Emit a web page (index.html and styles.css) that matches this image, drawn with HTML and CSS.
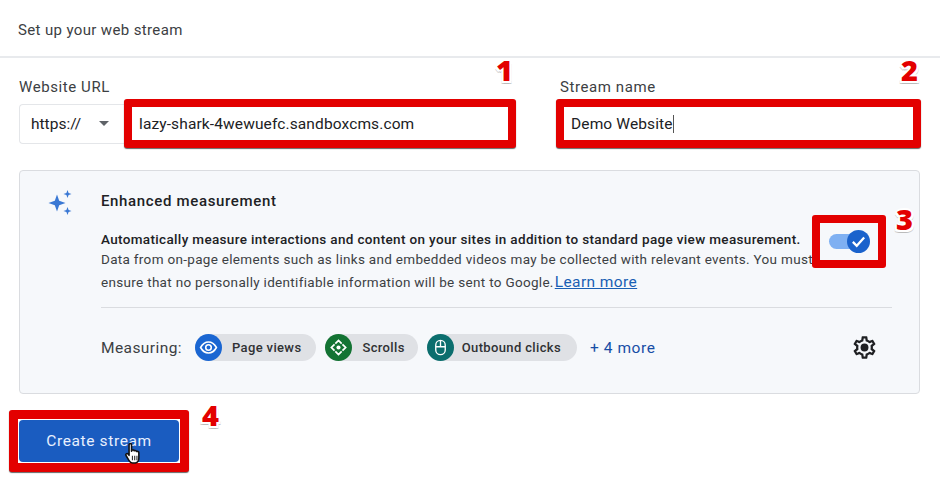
FILE: index.html
```html
<!DOCTYPE html>
<html lang="en">
<head>
<meta charset="utf-8">
<title>Set up your web stream</title>
<link rel="stylesheet" href="styles.css">
</head>
<body>
<div class="page">
  <header class="head">Set up your web stream</header>
  <section class="fields">
    <div class="url-field">
      <div class="label">Website URL</div>
      <div class="url-row">
        <div class="select">https://<span class="caret"></span></div>
        <div class="red-input">lazy-shark-4wewuefc.sandboxcms.com</div>
      </div>
    </div>
    <div class="name-field">
      <div class="label">Stream name</div>
      <div class="red-input name-input"><span class="typed">Demo Website</span></div>
    </div>
  </section>
  <section class="card">
    <div class="card-top">
      <svg class="sparkle" viewBox="0 0 26 26"><path fill="#3a78d4" d="M10 4.500l2.200 6.300 6.300 2.200-6.300 2.200L10 21.500l-2.200-6.300L1.500 13l6.300-2.200zM20.500 0l1.100 2.900 2.900 1.100-2.900 1.100-1.100 2.900-1.100-2.900-2.900-1.100 2.900-1.100zM20.500 17l1.100 2.900 2.900 1.100-2.900 1.100-1.100 2.900-1.100-2.900-2.900-1.100 2.900-1.100z"/></svg>
      <div class="card-title">Enhanced measurement</div>
    </div>
    <div class="desc-row">
      <div class="desc">
        <div class="desc-bold">Automatically measure interactions and content on your sites in addition to standard page view measurement.</div>
        <div class="desc-line">Data from on-page elements such as links and embedded videos may be collected with relevant events. You must</div>
        <div class="desc-line last">ensure that no personally identifiable information will be sent to Google.<a class="learn">Learn more</a></div>
      </div>
    </div>
    <div class="measuring">
      <span class="m-label">Measuring:</span>
      <span class="chip"><span class="chip-icon blue"><svg viewBox="0 0 24 24"><path fill="none" stroke="#fff" stroke-width="2" d="M2 12c2.500-4.500 6-7 10-7s7.500 2.500 10 7c-2.500 4.500-6 7-10 7s-7.500-2.500-10-7z"/><circle cx="12" cy="12" r="3.500" fill="none" stroke="#fff" stroke-width="2"/></svg></span>Page views</span>
      <span class="chip chip-short"><span class="chip-icon green"><svg viewBox="0 0 24 24"><path fill="none" stroke="#fff" stroke-width="2.200" d="M8 7l4-4 4 4M17 8l4 4-4 4M16 17l-4 4-4-4M7 16l-4-4 4-4"/><circle cx="12" cy="12" r="2.600" fill="#fff"/></svg></span>Scrolls</span>
      <span class="chip chip-wide"><span class="chip-icon teal"><svg viewBox="0 0 24 24"><rect x="6" y="3" width="12" height="18" rx="6" fill="none" stroke="#fff" stroke-width="1.700"/><path stroke="#fff" stroke-width="1.700" d="M6 11h12M12 3v8"/></svg></span>Outbound clicks</span>
      <span class="more">+ 4 more</span>
      <svg class="gear" viewBox="0 0 24 24"><path fill="#1f2023" fill-rule="evenodd" d="M19.430 12.980c.040-.320.070-.640.070-.980s-.030-.660-.070-.980l2.110-1.650c.190-.150.240-.420.120-.640l-2-3.460c-.120-.220-.390-.300-.610-.220l-2.490 1c-.520-.400-1.080-.730-1.690-.980l-.380-2.650C14.460 2.180 14.250 2 14 2h-4c-.250 0-.460.180-.490.420l-.380 2.650c-.610.250-1.170.590-1.690.980l-2.490-1c-.230-.090-.490 0-.610.220l-2 3.460c-.130.220-.070.490.120.640l2.110 1.650c-.040.320-.070.650-.070.980s.030.660.070.980l-2.110 1.650c-.190.150-.240.420-.120.640l2 3.460c.120.220.390.300.610.220l2.490-1c.520.400 1.080.730 1.690.980l.380 2.650c.030.240.240.420.490.420h4c.250 0 .460-.180.490-.420l.380-2.650c.610-.250 1.170-.590 1.690-.980l2.490 1c.230.090.490 0 .610-.220l2-3.460c.120-.220.070-.490-.120-.640l-2.110-1.650zM17.450 11.270c.040.310.050.520.050.730s-.020.430-.050.730l-.140 1.130.890.700 1.080.840-.700 1.210-1.270-.510-1.040-.420-.900.680c-.430.320-.840.560-1.250.730l-1.060.430-.160 1.130-.200 1.350h-1.400l-.190-1.350-.160-1.130-1.060-.430c-.430-.180-.830-.410-1.230-.710l-.910-.700-1.060.430-1.270.510-.700-1.210 1.080-.840.890-.700-.140-1.130c-.030-.310-.050-.540-.050-.740s.020-.430.050-.730l.140-1.130-.890-.700-1.080-.840.700-1.210 1.270.510 1.040.420.900-.680c.430-.320.840-.560 1.250-.730l1.060-.430.160-1.130.200-1.350h1.390l.190 1.350.160 1.130 1.060.430c.430.180.830.410 1.230.710l.910.700 1.060-.430 1.270-.510.700 1.210-1.070.85-.890.700.140 1.130z"/><circle cx="12" cy="12" r="3.500" fill="#1f2023"/></svg>
    </div>
    <div class="toggle-box"><span class="track"></span><span class="thumb"><svg viewBox="0 0 24 24"><path fill="none" stroke="#fff" stroke-width="3.200" d="M4 12.500l5.500 5.500L20 6.500"/></svg></span></div>
  </section>
  <div class="btn-box"><button class="create" type="button">Create stream</button></div>
  <svg class="hand" viewBox="0 0 16 20"><path fill="#fff" stroke="#111" stroke-width="1.400" stroke-linejoin="round" d="M4.500 2.200c0-1.500 2.200-1.500 2.200 0V8l.3-1c1.300-.4 2 0 2.100.6 1-.5 1.900-.1 2 .6 1-.3 2.100.1 2.100 1.100V14c0 2-1 4-3 4.500H7.500c-1.500 0-2.300-1-3-2.200L1.800 11.800c-.8-1.300.8-2.400 1.800-1.300l.9 1.100z"/><path stroke="#333" d="M7.500 12v4M9.500 12v4M11.500 12v4"/></svg>
  <span class="num n1">1</span>
  <span class="num n2">2</span>
  <span class="num n3">3</span>
  <span class="num n4">4</span>
</div>
</body>
</html>
```

FILE: styles.css
```css
* { box-sizing: border-box; }
html, body { margin: 0; padding: 0; background: #fff; }
body { font-family: Roboto, "Liberation Sans", sans-serif; color: #3c4043; overflow: hidden; }
.page { position: relative; width: 940px; height: 480px; overflow: hidden; }

.head { height: 58px; padding: 21px 18px 0; border-bottom: 2px solid #e8eaed; font-size: 15px; line-height: 18px; letter-spacing: .36px; }

.fields { display: flex; height: 112px; padding: 20px 19px 0 0; }
.label { font-size: 15px; line-height: 18px; letter-spacing: .58px; height: 21px; }
.url-field { margin-left: 19px; width: 497px; }
.url-row { display: flex; align-items: center; }
.select { display: flex; align-items: center; width: 105px; height: 40px; padding-left: 11px; border: 1px solid #e4e6e9; border-right: 0; border-radius: 4px 0 0 4px; font-size: 15.500px; color: #202124; }
.caret { margin-left: 18px; border-left: 5px solid transparent; border-right: 5px solid transparent; border-top: 5px solid #5f6368; }
.red-input { flex: 1; height: 49px; border: 8px solid #e30000; border-radius: 3px; padding-left: 7px; font-size: 15.500px; line-height: 34px; color: #202124; background: #fff; box-shadow: 0 1px 1px #666; letter-spacing: .12px; }
.name-field { margin-left: 40px; width: 365px; }
.name-field .label { padding-left: 4px; }
.name-input { flex: none; width: 365px; padding-left: 7px; }
.typed { border-right: 1px solid #555; }

.card { position: relative; margin: 0 20px 0 19px; height: 224px; background: #f6f8fb; border: 1px solid #dadce0; border-radius: 4px; padding: 0 27px 0 81px; }
.card-top { position: relative; height: 59px; display: flex; align-items: center; }
.sparkle { position: absolute; left: -54px; top: 19px; width: 26px; height: 26px; }
.card-title { font-size: 15px; font-weight: 500; color: #202124; letter-spacing: .65px; }
.desc { font-size: 13.500px; letter-spacing: .31px; }
.desc-row { height: 78px; border-bottom: 1px solid #dadce0; }
.desc-bold { font-weight: 500; color: #202124; line-height: 19px; letter-spacing: .34px; white-space: nowrap; }
.desc-line { white-space: nowrap; line-height: 23px; margin-top: -1px; }
.desc-line.last { margin-top: 0; }
.learn { font-size: 15.500px; color: #1a5fb4; text-decoration: underline; letter-spacing: .4px; margin-left: 1px; }

.measuring { display: flex; align-items: center; height: 79px; }
.m-label { font-size: 15.500px; color: #3c4043; margin-right: 13px; letter-spacing: .42px; }
.chip { display: inline-flex; align-items: center; height: 27px; border-radius: 14px; background: #dfe1e5; font-size: 13px; font-weight: 500; color: #303134; padding-right: 15px; margin-right: 9px; letter-spacing: .36px; }
.chip-short { padding-right: 13px; }
.chip-icon { display: flex; align-items: center; justify-content: center; width: 27px; height: 27px; border-radius: 50%; margin-right: 10px; }
.chip-wide { padding-right: 16px; }
.chip-wide .chip-icon { margin-right: 8px; }
.chip-icon svg { width: 19px; height: 19px; }
.blue { background: #1a66d2; }
.green { background: #137333; }
.teal { background: #0b6e6e; }
.more { margin-left: 4px; font-size: 15.500px; font-weight: 400; color: #174ea6; letter-spacing: .55px; }
.gear { margin-left: auto; margin-right: 14px; width: 27px; height: 27px; }

.toggle-box { position: absolute; left: 792px; top: 44px; width: 74px; height: 53px; border: 8px solid #e30000; border-radius: 3px; background: #f6f8fb; }
.track { position: absolute; left: 9px; top: 11px; width: 38px; height: 15px; border-radius: 8px; background: #7fb0f2; }
.thumb { position: absolute; left: 27px; top: 7px; width: 23px; height: 23px; border-radius: 50%; background: #1a62cc; display: flex; align-items: center; justify-content: center; }
.thumb svg { width: 17px; height: 17px; }

.btn-box { margin: 16px 0 0 9px; width: 180px; height: 62px; border: 9px solid #e30000; border-radius: 3px; background: #fff; padding: 1px; box-shadow: 0 1px 1px #666; }
.create { display: block; width: 100%; height: 100%; border: 0; border-radius: 4px; background: #1a5cc0; color: #e8f0fe; font-family: Roboto, sans-serif; font-size: 15.500px; font-weight: 400; letter-spacing: .62px; }

.hand { position: absolute; left: 124px; top: 442px; width: 18px; height: 23px; }
.num { position: absolute; font-family: "Open Sans", "DejaVu Sans", sans-serif; font-size: 29px; font-weight: 800; line-height: 30px; color: #e30000; text-shadow: 0 -2px 0 #fff, 2px 0 0 #fff, -2px 0 0 #fff, 0 2px 0 #fff, 2px 2px 0 #fff, -2px 2px 0 #fff, 0 3px 0 #bbb, 2px 3px 0 #ccc, -2px 3px 0 #ccc; }
.n1 { left: 496px; top: 55px; }
.n2 { left: 901px; top: 55px; }
.n3 { left: 896px; top: 204px; }
.n4 { left: 202px; top: 400px; }
```
